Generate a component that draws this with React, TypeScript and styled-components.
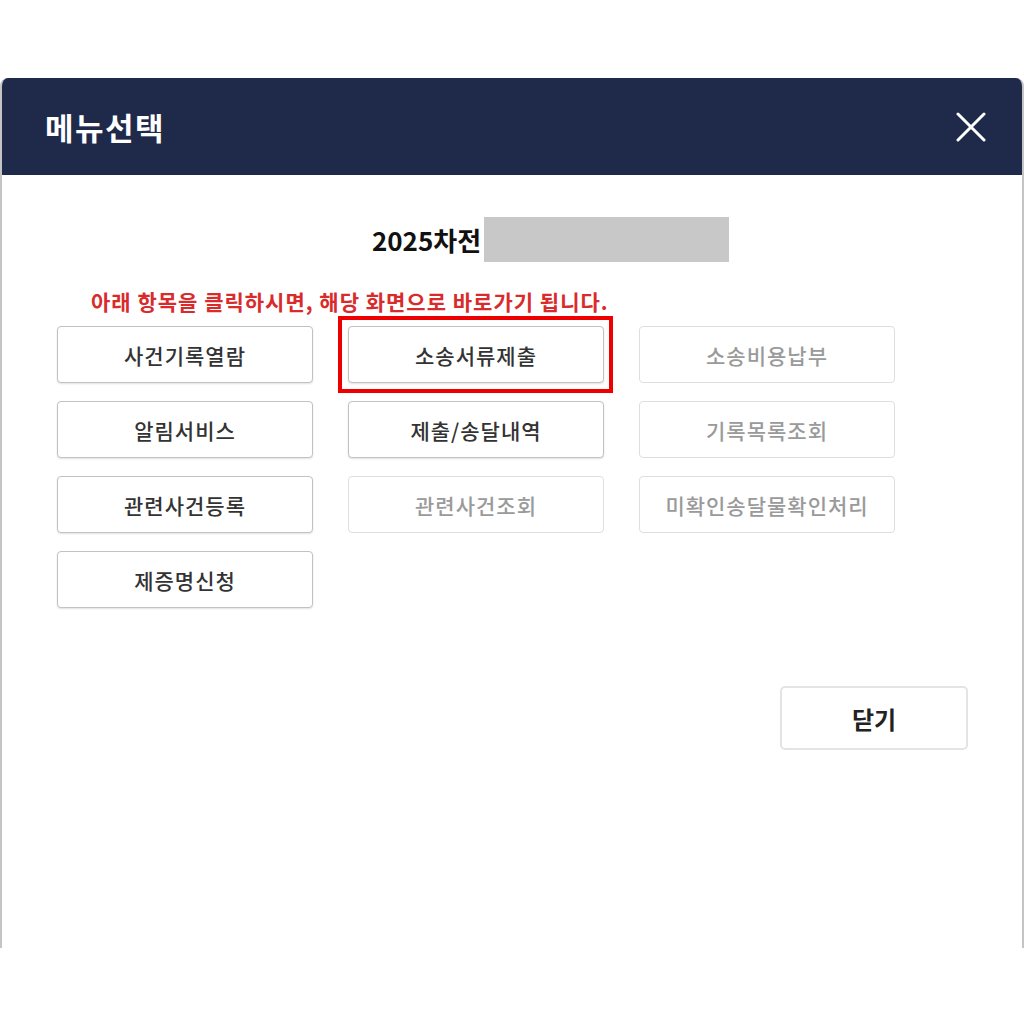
import React from "react";
import styled, { createGlobalStyle } from "styled-components";

const menuItems = [
  { label: "사건기록열람", enabled: true },
  { label: "소송서류제출", enabled: true, highlighted: true },
  { label: "소송비용납부", enabled: false },
  { label: "알림서비스", enabled: true },
  { label: "제출/송달내역", enabled: true },
  { label: "기록목록조회", enabled: false },
  { label: "관련사건등록", enabled: true },
  { label: "관련사건조회", enabled: false },
  { label: "미확인송달물확인처리", enabled: false },
  { label: "제증명신청", enabled: true },
];

const GlobalStyle = createGlobalStyle`
  html, body {
    margin: 0;
    padding: 0;
    background: #ffffff;
    font-family: "Noto Sans CJK KR", "Noto Sans", sans-serif;
  }
`;

const Dialog = styled.div`
  margin-top: 78px;
  height: 870px;
  box-sizing: border-box;
  background: #ffffff;
  border-left: 2px solid #c4c4c4;
  border-right: 2px solid #c4c4c4;
  border-radius: 8px 8px 0 0;
  overflow: hidden;
  display: flex;
  flex-direction: column;
`;

const Header = styled.div`
  height: 97px;
  background: #1f2a4b;
  display: flex;
  align-items: center;
  justify-content: space-between;
  padding: 0 36px 0 43px;
`;

const Title = styled.h1`
  margin: 0;
  color: #ffffff;
  font-size: 31px;
  font-weight: 700;
  letter-spacing: 1.5px;
`;

const CloseIcon = styled.button`
  width: 30px;
  height: 30px;
  padding: 0;
  border: none;
  background: transparent;
  display: flex;
  align-items: center;
  justify-content: center;
  cursor: pointer;
`;

const Body = styled.div`
  padding: 42px 56px 0 55px;
  display: flex;
  flex-direction: column;
`;

const CaseRow = styled.div`
  display: flex;
  justify-content: center;
  align-items: center;
  padding-left: 78px;
`;

const CaseName = styled.span`
  font-size: 26px;
  font-weight: 700;
  color: #111111;
`;

const Masked = styled.div`
  width: 245px;
  height: 45px;
  margin-left: 3px;
  background: #c8c8c8;
`;

const Notice = styled.p`
  margin: 26px 0 0 34px;
  font-size: 21px;
  line-height: 26px;
  font-weight: 700;
  color: #d92b2b;
  letter-spacing: 1px;
`;

const MenuGrid = styled.div`
  margin-top: 12px;
  display: grid;
  grid-template-columns: repeat(3, 256px);
  grid-auto-rows: 57px;
  column-gap: 35px;
  row-gap: 18px;
`;

const MenuButton = styled.button<{ $enabled: boolean; $highlighted?: boolean }>`
  position: relative;
  box-sizing: border-box;
  font-family: inherit;
  font-size: 21px;
  font-weight: 500;
  letter-spacing: 1px;
  background: #ffffff;
  border-radius: 4px;
  border: 1.5px solid ${(p) => (p.$enabled ? "#c2c2c2" : "#dedede")};
  color: ${(p) => (p.$enabled ? "#333333" : "#9a9a9a")};
  box-shadow: ${(p) => (p.$enabled ? "0 1px 2px rgba(0,0,0,0.12)" : "none")};
  cursor: ${(p) => (p.$enabled ? "pointer" : "default")};

  &::after {
    content: "";
    display: ${(p) => (p.$highlighted ? "block" : "none")};
    position: absolute;
    top: -11px;
    left: -11px;
    right: -10px;
    bottom: -11px;
    border: 4px solid #ee0000;
    pointer-events: none;
  }
`;

const Footer = styled.div`
  display: flex;
  justify-content: flex-end;
  padding: 78px 54px 0 0;
`;

const CloseButton = styled.button`
  width: 188px;
  height: 64px;
  box-sizing: border-box;
  font-family: inherit;
  font-size: 24px;
  font-weight: 700;
  color: #222222;
  background: #ffffff;
  border: 2px solid #e4e4e4;
  border-radius: 5px;
  cursor: pointer;
`;

export default function App() {
  return (
    <>
      <GlobalStyle />
      <Dialog>
        <Header>
          <Title>메뉴선택</Title>
          <CloseIcon aria-label="닫기">
            <svg width="30" height="30" viewBox="0 0 30 30">
              <path
                d="M2 2 L28 28 M28 2 L2 28"
                stroke="#ffffff"
                strokeWidth="3"
                strokeLinecap="round"
              />
            </svg>
          </CloseIcon>
        </Header>
        <Body>
          <CaseRow>
            <CaseName>2025차전</CaseName>
            <Masked />
          </CaseRow>
          <Notice>아래 항목을 클릭하시면, 해당 화면으로 바로가기 됩니다.</Notice>
          <MenuGrid>
            {menuItems.map((item) => (
              <MenuButton
                key={item.label}
                $enabled={item.enabled}
                $highlighted={item.highlighted}
              >
                {item.label}
              </MenuButton>
            ))}
          </MenuGrid>
        </Body>
        <Footer>
          <CloseButton>닫기</CloseButton>
        </Footer>
      </Dialog>
    </>
  );
}
